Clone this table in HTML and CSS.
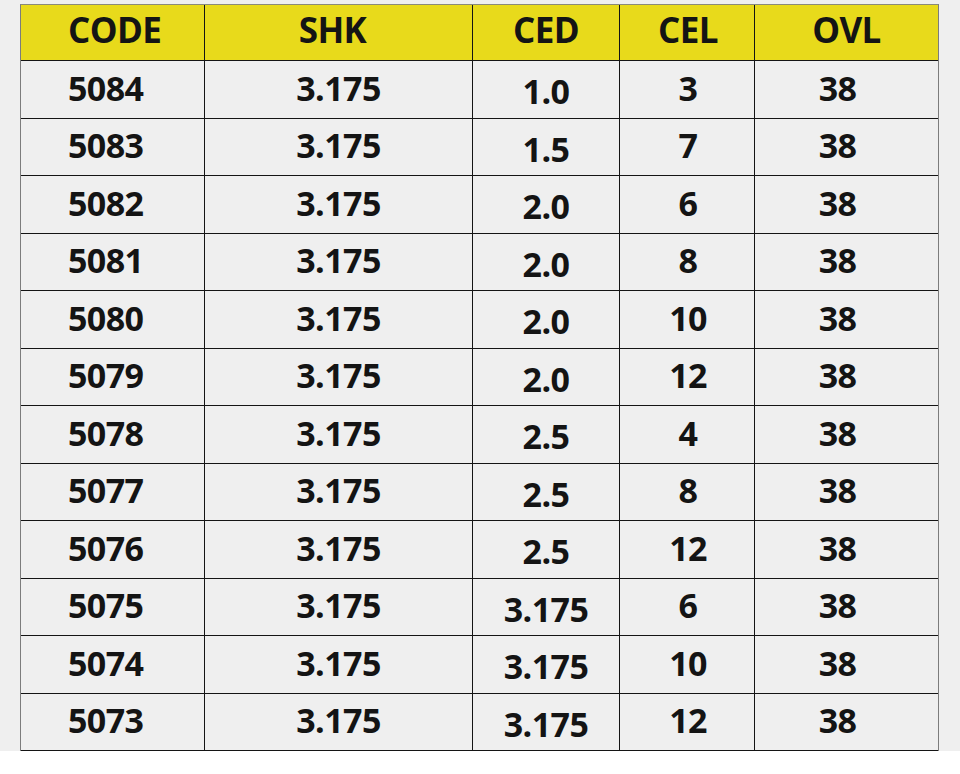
FILE: index.html
```html
<!DOCTYPE html>
<html>
<head>
<meta charset="utf-8">
<link rel="stylesheet" href="styles.css">
</head>
<body>
<div class="page">
  <div class="grid">
    <div class="cell head c1">CODE</div>
    <div class="cell head c2">SHK</div>
    <div class="cell head c3">CED</div>
    <div class="cell head c4">CEL</div>
    <div class="cell head c5">OVL</div>

    <div class="cell c1">5084</div><div class="cell c2">3.175</div><div class="cell c3 low">1.0</div><div class="cell c4">3</div><div class="cell c5 d5">38</div>
    <div class="cell c1">5083</div><div class="cell c2">3.175</div><div class="cell c3 low">1.5</div><div class="cell c4">7</div><div class="cell c5 d5">38</div>
    <div class="cell c1">5082</div><div class="cell c2">3.175</div><div class="cell c3 low">2.0</div><div class="cell c4">6</div><div class="cell c5 d5">38</div>
    <div class="cell c1">5081</div><div class="cell c2">3.175</div><div class="cell c3 low">2.0</div><div class="cell c4">8</div><div class="cell c5 d5">38</div>
    <div class="cell c1">5080</div><div class="cell c2">3.175</div><div class="cell c3 low">2.0</div><div class="cell c4">10</div><div class="cell c5 d5">38</div>
    <div class="cell c1">5079</div><div class="cell c2">3.175</div><div class="cell c3 low">2.0</div><div class="cell c4">12</div><div class="cell c5 d5">38</div>
    <div class="cell c1">5078</div><div class="cell c2">3.175</div><div class="cell c3 low">2.5</div><div class="cell c4">4</div><div class="cell c5 d5">38</div>
    <div class="cell c1">5077</div><div class="cell c2">3.175</div><div class="cell c3 low">2.5</div><div class="cell c4">8</div><div class="cell c5 d5">38</div>
    <div class="cell c1">5076</div><div class="cell c2">3.175</div><div class="cell c3 low">2.5</div><div class="cell c4">12</div><div class="cell c5 d5">38</div>
    <div class="cell c1">5075</div><div class="cell c2">3.175</div><div class="cell c3 low">3.175</div><div class="cell c4">6</div><div class="cell c5 d5">38</div>
    <div class="cell c1">5074</div><div class="cell c2">3.175</div><div class="cell c3 low">3.175</div><div class="cell c4">10</div><div class="cell c5 d5">38</div>
    <div class="cell c1">5073</div><div class="cell c2">3.175</div><div class="cell c3 low">3.175</div><div class="cell c4">12</div><div class="cell c5 d5">38</div>
  </div>
</div>
</body>
</html>
```
FILE: styles.css
```css
* { box-sizing: border-box; }
html, body { margin: 0; padding: 0; background: #ffffff; }
.page {
  width: 960px;
  height: 751px;
  background: #efefef;
  padding: 4px 21px 0 20px;
  overflow: hidden;
}
.grid {
  display: grid;
  grid-template-columns: 184px 268px 147px 135px 183px;
  grid-template-rows: 56px repeat(12, 57.5px);
  border-left: 1px solid #7c7c7c;
  border-top: 1px solid #8a8a7a;
  border-right: 1px solid #7c7c7c;
  width: 919px;
}
.cell {
  display: flex;
  align-items: center;
  justify-content: center;
  border-right: 1px solid #141414;
  border-bottom: 1px solid #141414;
  font-family: "Open Sans", "Liberation Sans", sans-serif;
  font-weight: 700;
  font-size: 34px;
  letter-spacing: -0.6px;
  color: #141414;
  background: #efefef;
  line-height: 1;
  padding-bottom: 3px;
}
.cell.c5 { border-right: none; }
.head {
  background: #e8da1b;
  font-size: 35px;
  padding-bottom: 7px;
}
.c1 { justify-content: flex-start; padding-left: 47px; }
.head.c2 { padding-right: 12px; }
.low { padding-top: 4px; padding-bottom: 0; }
.d5 { padding-right: 18px; }
.c4 { padding-left: 2px; }
```
